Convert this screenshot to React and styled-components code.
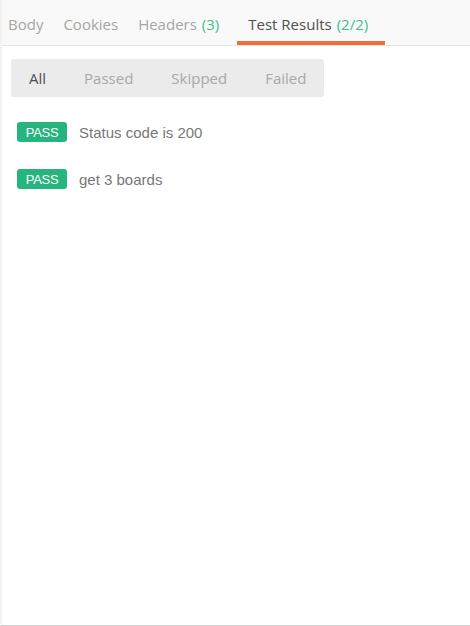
import React from 'react'
import styled, { createGlobalStyle } from 'styled-components'

const GlobalStyle = createGlobalStyle`
  html, body {
    margin: 0;
    padding: 0;
    background: #fff;
  }
  #root {
    width: 470px;
    height: 626px;
  }
`

const Pane = styled.div`
  box-sizing: border-box;
  width: 470px;
  height: 626px;
  border-left: 2px solid #f2f2f2;
  border-bottom: 1px solid #cfcfcf;
  background: #fff;
  display: flex;
  flex-direction: column;
`

const TabBar = styled.div`
  display: flex;
  align-items: stretch;
  height: 45px;
  background: #f9f9f9;
  border-bottom: 1px solid #e6e6e6;
  padding-left: 6px;
  font-family: 'Open Sans', sans-serif;
  font-size: 15px;
`

const Tab = styled.div`
  box-sizing: border-box;
  display: flex;
  align-items: center;
  padding: 6px ${p => (p.active ? '17px' : '10px')} 0 ${p => (p.active ? '11px' : '10px')};
  margin-left: ${p => (p.active ? '8px' : '0')};
  color: ${p => (p.active ? '#505050' : '#a6a6a6')};
  border-bottom: 4px solid ${p => (p.active ? '#f26b3a' : 'transparent')};
  &:first-child {
    padding-left: 0;
  }
`

const Count = styled.span`
  color: #3fbf8e;
  margin-left: 5px;
`

const Body = styled.div`
  padding: 13px 9px;
`

const Filter = styled.div`
  display: inline-flex;
  align-items: center;
  height: 38px;
  width: 313px;
  background: #ebebeb;
  border-radius: 3px;
  font-family: 'Open Sans', sans-serif;
  font-size: 15px;
`

const FilterItem = styled.div`
  color: ${p => (p.active ? '#505050' : '#a8a8a8')};
  padding: 0 19px;
  &:first-child {
    padding-left: 18px;
  }
`

const Results = styled.ul`
  list-style: none;
  margin: 25px 0 0;
  padding: 0 0 0 6px;
  display: flex;
  flex-direction: column;
  gap: 27px;
`

const Row = styled.li`
  display: flex;
  align-items: center;
  font-family: 'Liberation Sans', Arial, sans-serif;
`

const Badge = styled.span`
  display: inline-flex;
  align-items: center;
  justify-content: center;
  width: 50px;
  height: 20px;
  border-radius: 3px;
  background: #26b47f;
  color: #fff;
  font-size: 13px;
  letter-spacing: -0.3px;
`

const Name = styled.span`
  margin-left: 12px;
  font-size: 15px;
  color: #777;
`

const tests = [
  { status: 'PASS', name: 'Status code is 200' },
  { status: 'PASS', name: 'get 3 boards' }
]

export default function App () {
  return (
    <>
      <GlobalStyle />
      <Pane>
        <TabBar>
          <Tab>Body</Tab>
          <Tab>Cookies</Tab>
          <Tab>Headers<Count>(3)</Count></Tab>
          <Tab active>Test Results<Count>(2/2)</Count></Tab>
        </TabBar>
        <Body>
          <Filter>
            <FilterItem active>All</FilterItem>
            <FilterItem>Passed</FilterItem>
            <FilterItem>Skipped</FilterItem>
            <FilterItem>Failed</FilterItem>
          </Filter>
          <Results>
            {tests.map((t, i) => (
              <Row key={i}>
                <Badge>{t.status}</Badge>
                <Name>{t.name}</Name>
              </Row>
            ))}
          </Results>
        </Body>
      </Pane>
    </>
  )
}
